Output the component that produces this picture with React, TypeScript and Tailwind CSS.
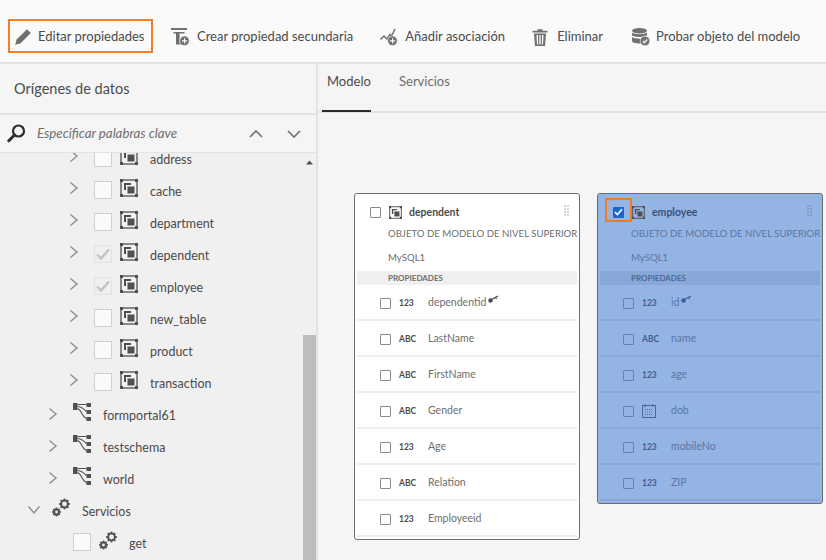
import * as React from "react";

const toolbarItems = [
  { label: "Crear propiedad secundaria", icon: <CreateIcon />, className: "ml-[18px] gap-[7px]" },
  { label: "Añadir asociación", icon: <AssocIcon />, className: "ml-[27px] gap-[7px]" },
  { label: "Eliminar", icon: <TrashIcon />, className: "ml-[27px] gap-[9px]" },
  { label: "Probar objeto del modelo", icon: <DbIcon />, className: "ml-[29px] gap-[6px]" },
];

const tables = [
  { name: "address", state: "off" },
  { name: "cache", state: "off" },
  { name: "department", state: "off" },
  { name: "dependent", state: "on" },
  { name: "employee", state: "on" },
  { name: "new_table", state: "off" },
  { name: "product", state: "off" },
  { name: "transaction", state: "off" },
];

const dependentProps = [
  { type: "123", name: "dependentid", isKey: true },
  { type: "ABC", name: "LastName" },
  { type: "ABC", name: "FirstName" },
  { type: "ABC", name: "Gender" },
  { type: "123", name: "Age" },
  { type: "ABC", name: "Relation" },
  { type: "123", name: "Employeeid" },
];

const employeeProps = [
  { type: "123", name: "id", isKey: true },
  { type: "ABC", name: "name" },
  { type: "123", name: "age" },
  { type: "date", name: "dob" },
  { type: "123", name: "mobileNo" },
  { type: "123", name: "ZIP" },
];

function PencilIcon() {
  return (
    <svg width="18" height="18" viewBox="0 0 18 18" className="shrink-0 fill-[#707070]">
      <path d="M13 1.200 16.800 5 6.400 15.400 1.200 16.800 2.600 11.600Z" />
    </svg>
  );
}

function CreateIcon() {
  return (
    <svg width="19" height="18" viewBox="0 0 19 18" className="shrink-0">
      <path d="M0 0h16v2H0zM2.500 4h11v1.600h-11zM5 5.500h3.600v11H5zM8 15h3v1.500H8z" className="fill-[#707070]" />
      <circle cx="13.500" cy="12.800" r="4.800" className="fill-[#707070]" stroke="#fafafa" strokeWidth="0.600" />
      <path d="M13 10.200h1.100v2.100h2.100v1.100h-2.100v2.100H13v-2.100h-2.100v-1.100H13z" className="fill-[#fafafa]" />
    </svg>
  );
}

function AssocIcon() {
  return (
    <svg width="18" height="18" viewBox="0 0 18 18" className="shrink-0">
      <path d="M0.500 11.500 4 8l3 3 3-4.500 1.500 1.500L15 1" fill="none" stroke="#707070" strokeWidth="1.500" />
      <circle cx="12.500" cy="12.800" r="4.800" className="fill-[#707070]" stroke="#fafafa" strokeWidth="0.600" />
      <path d="M12 10.200h1.100v2.100h2.100v1.100h-2.100v2.100H12v-2.100H9.900v-1.100H12z" className="fill-[#fafafa]" />
    </svg>
  );
}

function TrashIcon() {
  return (
    <svg width="16" height="17" viewBox="0 0 16 17" className="shrink-0 fill-[#707070]">
      <path d="M0.500 1.800H5.500V0.300H10.500V1.800H15.500V3.400H0.500Z" />
      <path d="M2 4.400H14L13 17H3ZM4.500 6 5 15.400H6.200L6 6ZM7.300 6V15.400H8.700V6ZM10 6 9.800 15.400H11L11.500 6Z" fillRule="evenodd" />
    </svg>
  );
}

function DbIcon() {
  return (
    <svg width="18" height="18" viewBox="0 0 18 18" className="shrink-0">
      <ellipse cx="7.500" cy="2.800" rx="7.500" ry="2.800" className="fill-[#707070]" />
      <path d="M0 4.500c2 2.300 13 2.300 15 0v2.800c-2 2.300-13 2.300-15 0zM0 9c2 2.300 13 2.300 15 0v1.500H9v5H7.500c-4 0-7.500-1-7.500-2.800z" className="fill-[#707070]" />
      <circle cx="13" cy="13" r="4.800" className="fill-[#707070]" stroke="#fafafa" strokeWidth="0.600" />
      <path d="M10.800 13l1.600 1.700 2.800-3.200" fill="none" stroke="#fafafa" strokeWidth="1.300" />
    </svg>
  );
}

function SearchIcon() {
  return (
    <svg width="19" height="19" viewBox="0 0 19 19" className="shrink-0">
      <circle cx="11.500" cy="7" r="5.500" fill="none" stroke="#2c2c2c" strokeWidth="2.200" />
      <path d="M7.500 11 1.800 16.800" stroke="#2c2c2c" strokeWidth="3" strokeLinecap="round" />
    </svg>
  );
}

function Chevron({ down = false, className = "" }: { down?: boolean; className?: string }) {
  return (
    <svg width="14" height="14" viewBox="0 0 14 14" className={`shrink-0 ${down ? "rotate-90" : ""} ${className}`}>
      <path d="M3.500 1.500 10 7 3.500 12.500" fill="none" stroke="#8e8e8e" strokeWidth="1.400" />
    </svg>
  );
}

function TableIcon({ size = 18 }: { size?: number }) {
  return (
    <svg width={size} height={size} viewBox="0 0 18 18" className="shrink-0">
      <rect x="1" y="1" width="16" height="16" fill="none" stroke="#505050" strokeWidth="1.300" />
      <path d="M0 0h3v3H0zM15 0h3v3h-3zM0 15h3v3H0zM15 15h3v3h-3z" fill="#505050" />
      <path d="M4 4h7v2H6v5H4z" fill="#505050" />
      <rect x="7.500" y="7.500" width="7" height="7" fill="#505050" />
    </svg>
  );
}

function SchemaIcon() {
  return (
    <svg width="18" height="18" viewBox="0 0 18 18" className="shrink-0">
      <path d="M0 0h4.500v7H0zM13.500 0H18v4h-4.500zM13.500 7H18v4h-4.500zM13.500 14H18v4h-4.500z" fill="#505050" />
      <path d="M4.500 1.500h9M4.500 3.500c4 0 6 2 9 5M4.500 5.500c4 1 4 8 9 10.500" fill="none" stroke="#505050" strokeWidth="1.100" />
    </svg>
  );
}

function Gear({ cx, cy, r }: { cx: number; cy: number; r: number }) {
  const teeth = [0, 45, 90, 135];
  return (
    <g>
      {teeth.map((a) => (
        <rect
          key={a}
          x={cx - 0.9}
          y={cy - r - 1.400}
          width="1.800"
          height={2 * r + 2.800}
          fill="#505050"
          transform={`rotate(${a} ${cx} ${cy})`}
        />
      ))}
      <circle cx={cx} cy={cy} r={r - 0.6} fill="none" stroke="#505050" strokeWidth="2" />
      <circle cx={cx} cy={cy} r={r - 1.600} fill="#f0f0f0" />
    </g>
  );
}

function GearsIcon() {
  return (
    <svg width="19" height="19" viewBox="0 0 19 19" className="shrink-0">
      <Gear cx={12.500} cy={6} r={4} />
      <Gear cx={4.500} cy={14} r={3} />
    </svg>
  );
}

function KeyIcon({ color }: { color: string }) {
  return (
    <svg width="11" height="8" viewBox="0 0 11 8" className="mt-[8px] ml-[2px] shrink-0 self-start">
      <circle cx="2.500" cy="5.500" r="2.200" fill={color} />
      <path d="M3.500 4.500 10 1M7.500 2.400l1 1.600" fill="none" stroke={color} strokeWidth="1.300" />
    </svg>
  );
}

function TreeCheck({ state }: { state: string }) {
  if (state === "on") {
    return (
      <span className="flex h-[18px] w-[18px] shrink-0 items-center justify-center border border-[#e2e2e2] bg-[#efefef]">
        <svg width="14" height="12" viewBox="0 0 14 12">
          <path d="M1 6.500 5 10.500 13 1.500" fill="none" stroke="#c4c4c4" strokeWidth="2.400" />
        </svg>
      </span>
    );
  }
  return <span className="block h-[18px] w-[18px] shrink-0 border border-[#cfcfcf] bg-[#fafafa]" />;
}

function TableRow({ name, state }: { name: string; state: string }) {
  return (
    <div className="flex h-8 items-center pl-[67px]">
      <span className="-mt-[6px]">
        <Chevron />
      </span>
      <span className="ml-[13px] -mt-[2px]">
        <TreeCheck state={state} />
      </span>
      <span className="ml-2 -mt-[6px]">
        <TableIcon />
      </span>
      <span className="ml-3 pt-[2px] text-[12.500px] text-[#4b4b4b]">{name}</span>
    </div>
  );
}

function SchemaRow({ name }: { name: string }) {
  return (
    <div className="flex h-8 items-center pl-[46px]">
      <span className="-mt-[2px]">
        <Chevron />
      </span>
      <span className="ml-[13px] -mt-[7px]">
        <SchemaIcon />
      </span>
      <span className="ml-3 pt-[2px] text-[12.500px] text-[#4b4b4b]">{name}</span>
    </div>
  );
}

function TypeMark({ type, selected }: { type: string; selected: boolean }) {
  if (type === "date") {
    return (
      <svg width="14" height="14" viewBox="0 0 14 14" className="shrink-0">
        <rect x="0.500" y="1.500" width="13" height="12" fill="none" stroke="#46689b" />
        <path d="M3 0v3M11 0v3" stroke="#46689b" />
        <path d="M3 5.500h8M3 8h8M3 10.500h8" stroke="#46689b" strokeDasharray="1 1" />
      </svg>
    );
  }
  return (
    <span className={`w-[14px] text-[8.500px] leading-none font-bold ${selected ? "text-[#3f5f90]" : "text-[#4b4b4b]"}`}>
      {type}
    </span>
  );
}

function PropRow({
  prop,
  selected,
}: {
  prop: { type: string; name: string; isKey?: boolean };
  selected: boolean;
}) {
  return (
    <div
      className={`flex h-9 items-center border-b-2 pt-[2px] pl-[23px] ${selected ? "border-[#88a9d8]" : "border-[#eeeeee]"}`}
    >
      <span
        className={`block h-[11px] w-[11px] shrink-0 rounded-[1px] border-[1.500px] ${selected ? "border-[#6582b0]" : "border-[#8a8a8a]"}`}
      />
      <span className="ml-[8px] flex w-[29px] shrink-0 items-center">
        <TypeMark type={prop.type} selected={selected} />
      </span>
      <span className={`text-[10.500px] ${selected ? "text-[#5a76a5]" : "text-[#6e6e6e]"}`}>{prop.name}</span>
      {prop.isKey && <KeyIcon color={selected ? "#3f5f90" : "#4b4b4b"} />}
    </div>
  );
}

function ModelCard({
  title,
  props,
  selected = false,
}: {
  title: string;
  props: { type: string; name: string; isKey?: boolean }[];
  selected?: boolean;
}) {
  const muted = selected ? "text-[#5a76a5]" : "text-[#6e6e6e]";
  return (
    <div className={`w-[226px] rounded-[3px] border border-[#6e6e6e] pb-[2px] ${selected ? "bg-[#94b4e4]" : "bg-white"}`}>
      <div className="relative flex h-[27px] items-center pt-[9px] pl-[15px]">
        {selected ? (
          <span className="relative flex h-[11px] w-[11px] shrink-0 items-center justify-center rounded-[1px] bg-[#1b66c9]">
            <svg width="9" height="8" viewBox="0 0 9 8">
              <path d="M1 4.200 3.400 6.500 8 1.200" fill="none" stroke="#ffffff" strokeWidth="1.600" />
            </svg>
            <span className="absolute -top-[9px] -left-[8px] h-[24px] w-[27px] border-2 border-[#f47a20]" />
          </span>
        ) : (
          <span className="block h-[11px] w-[11px] shrink-0 rounded-[1px] border-[1.500px] border-[#8a8a8a]" />
        )}
        <span className="ml-2">
          <TableIcon size={13} />
        </span>
        <span className={`ml-[7px] mt-[2px] text-[10.500px] font-bold ${selected ? "text-[#3a5075]" : "text-[#4b4b4b]"}`}>
          {title}
        </span>
        <span className="absolute top-[11px] right-[10px] grid grid-cols-2 gap-[1px]">
          {[0, 1, 2, 3, 4, 5, 6, 7].map((i) => (
            <span key={i} className={`block h-[2px] w-[2px] ${selected ? "bg-[#7e9cc8]" : "bg-[#d5d5d5]"}`} />
          ))}
        </span>
      </div>
      <div className={`pl-[33px] text-[9.650px] leading-[24px] whitespace-nowrap ${muted}`}>
        OBJETO DE MODELO DE NIVEL SUPERIOR
      </div>
      <div className={`pl-[33px] text-[9.650px] leading-[24px] ${muted}`}>MySQL1</div>
      <div className="mx-[2px] mt-[2px]">
        <div
          className={`flex h-[14px] items-center pl-[31px] text-[8px] font-bold ${selected ? "bg-[#88a9d8] text-[#4c6a9a]" : "bg-[#f0f0f0] text-[#6e6e6e]"}`}
        >
          PROPIEDADES
        </div>
        {props.map((prop) => (
          <PropRow key={prop.name} prop={prop} selected={selected} />
        ))}
      </div>
    </div>
  );
}

export default function App() {
  return (
    <div className="flex h-[560px] w-[826px] flex-col overflow-hidden bg-[#f5f5f5] font-['Lato','Open_Sans',sans-serif] text-[#4b4b4b]">
      <header className="flex h-16 shrink-0 items-center border-b-2 border-[#e3e3e3] bg-[#fafafa] pt-[10px] pl-2">
        <div className="flex h-[34px] w-[145px] items-center border-2 border-[#f47f27] pt-[2px] pl-1">
          <PencilIcon />
          <span className="ml-[6px] text-[13px] whitespace-nowrap">Editar propiedades</span>
        </div>
        {toolbarItems.map((item) => (
          <div key={item.label} className={`mt-[2px] flex items-center ${item.className}`}>
            {item.icon}
            <span className="text-[13px] whitespace-nowrap">{item.label}</span>
          </div>
        ))}
      </header>

      <div className="flex min-h-0 flex-1">
        <aside className="flex w-[318px] shrink-0 flex-col border-r-2 border-[#e3e3e3] bg-[#f0f0f0]">
          <div className="flex h-[51px] shrink-0 items-center border-b-2 border-[#e3e3e3] bg-[#f5f5f5] pl-[14px] text-[14.500px]">
            Orígenes de datos
          </div>
          <div className="flex h-[38px] shrink-0 items-center border-b border-[#e3e3e3] bg-[#f5f5f5] pl-[7px]">
            <SearchIcon />
            <span className="ml-[11px] w-[141px] text-[13.250px] whitespace-nowrap text-[#6e6e6e] italic">
              Especificar palabras clave
            </span>
            <span className="ml-[71px] rotate-180">
              <svg width="14" height="8" viewBox="0 0 14 8">
                <path d="M1 1 7 7 13 1" fill="none" stroke="#6e6e6e" strokeWidth="1.600" />
              </svg>
            </span>
            <span className="ml-[24px]">
              <svg width="14" height="8" viewBox="0 0 14 8">
                <path d="M1 1 7 7 13 1" fill="none" stroke="#6e6e6e" strokeWidth="1.600" />
              </svg>
            </span>
          </div>
          <div className="flex min-h-0 flex-1">
            <div className="min-w-0 flex-1 overflow-hidden">
              <div className="-mt-[10px]">
                {tables.map((t) => (
                  <TableRow key={t.name} name={t.name} state={t.state} />
                ))}
                <SchemaRow name="formportal61" />
                <SchemaRow name="testschema" />
                <SchemaRow name="world" />
                <div className="flex h-8 items-center pl-[27px]">
                  <Chevron down className="-mt-[2px]" />
                  <span className="ml-[11px] -mt-[7px]">
                    <GearsIcon />
                  </span>
                  <span className="ml-[11px] pt-[2px] text-[12.500px]">Servicios</span>
                </div>
                <div className="flex h-8 items-center pl-[73px]">
                  <span className="-mt-[2px]">
                    <TreeCheck state="off" />
                  </span>
                  <span className="ml-2 -mt-[6px]">
                    <GearsIcon />
                  </span>
                  <span className="ml-[11px] pt-[2px] text-[12.500px]">get</span>
                </div>
              </div>
            </div>
            <div className="flex w-[13px] shrink-0 flex-col justify-between bg-[#f0f0f0]">
              <svg width="13" height="20" viewBox="0 0 13 20">
                <path d="M3 11.500 6.500 7.500 10 11.500Z" fill="#505050" />
              </svg>
              <div className="h-[225px] bg-[#bdbdbd]" />
            </div>
          </div>
        </aside>

        <main className="flex min-w-0 flex-1 flex-col">
          <nav className="flex h-[49px] shrink-0 items-start border-b-2 border-[#e3e3e3] pl-[4px] text-[13px]">
            <div className="h-[48px] w-[49px] border-b-2 border-[#2c2c2c] pt-[8px] pl-[5px]">Modelo</div>
            <div className="ml-[28px] pt-[8px] text-[#6e6e6e]">Servicios</div>
          </nav>
          <div className="flex items-start gap-[17px] pt-[80px] pl-[36px]">
            <ModelCard title="dependent" props={dependentProps} />
            <ModelCard title="employee" props={employeeProps} selected />
          </div>
        </main>
      </div>
    </div>
  );
}
